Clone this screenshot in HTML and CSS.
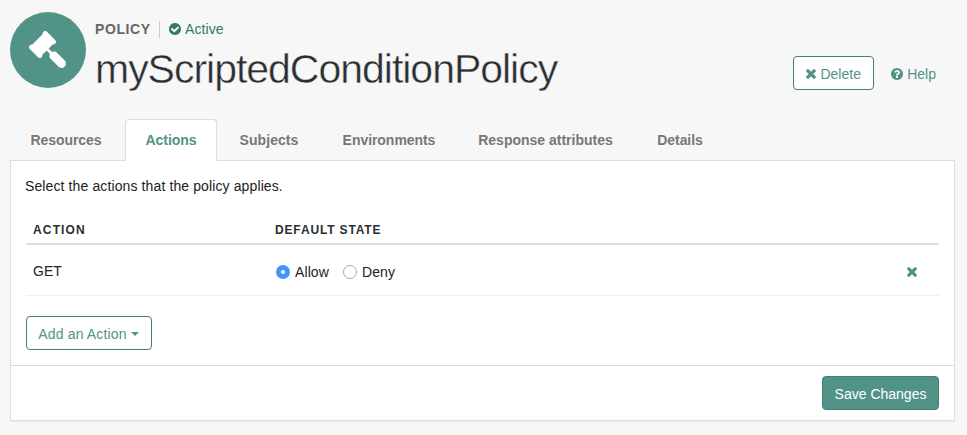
FILE: index.html
```html
<!DOCTYPE html>
<html lang="en">
<head>
<meta charset="utf-8">
<title>myScriptedConditionPolicy</title>
<link rel="stylesheet" href="styles.css">
</head>
<body>
<svg class="defs" width="0" height="0" aria-hidden="true">
  <symbol id="gavel" viewBox="0 0 37 37"><g stroke="currentColor" stroke-linecap="round" stroke-linejoin="round"><path stroke-width="5" d="M16.2 2.6 24.4 10.8M2.6 16.2l8.2 8.2"/><path stroke-width="2" d="M14.3 4 4 14.3 12.7 23 23 12.7Z"/><path stroke-width="2.8" d="M16 16 25 25"/><path stroke-width="2.6" d="M26.2 21.8 35.3 31 35.6 33.6 33.6 35.6 31 35.3 21.8 26.2 22 23.6 23.6 22Z"/></g></symbol>
  <symbol id="times" viewBox="110 -1170 1188 1188"><path transform="scale(1,-1)" d="M1298 214q0 -40 -28 -68l-136 -136q-28 -28 -68 -28t-68 28l-294 294l-294 -294q-28 -28 -68 -28t-68 28l-136 136q-28 28 -28 68t28 68l294 294l-294 294q-28 28 -28 68t28 68l136 136q28 28 68 28t68 -28l294 -294l294 294q28 28 68 28t68 -28l136 -136q28 -28 28 -68t-28 -68l-294 -294l294 -294q28 -28 28 -68z"/></symbol>
  <symbol id="check" viewBox="0 -1408 1536 1536"><path transform="scale(1,-1)" d="M1284 802q0 28 -18 46l-91 90q-19 19 -45 19t-45 -19l-408 -407l-226 226q-19 19 -45 19t-45 -19l-91 -90q-18 -18 -18 -46q0 -27 18 -45l362 -362q19 -19 45 -19q27 0 46 19l543 543q18 18 18 45zM1536 640q0 -209 -103 -385.5t-279.5 -279.5t-385.5 -103t-385.5 103t-279.5 279.5t-103 385.5t103 385.5t279.5 279.5t385.5 103t385.5 -103t279.5 -279.5t103 -385.5z"/></symbol>
  <symbol id="question" viewBox="0 -1408 1536 1536"><path transform="scale(1,-1)" d="M896 160v192q0 14 -9 23t-23 9h-192q-14 0 -23 -9t-9 -23v-192q0 -14 9 -23t23 -9h192q14 0 23 9t9 23zM1152 832q0 88 -55.5 163t-138.5 116t-170 41q-243 0 -371 -213q-15 -24 8 -42l132 -100q7 -6 19 -6q16 0 25 12q53 68 86 92q34 24 86 24q48 0 85.5 -26t37.5 -59q0 -38 -20 -61t-68 -45q-63 -28 -115.5 -86.5t-52.5 -125.5v-36q0 -14 9 -23t23 -9h192q14 0 23 9t9 23q0 19 21.5 49.5t54.5 49.5q32 18 49 28.5t46 35t44.5 48t28 60.5t12.5 81zM1536 640q0 -209 -103 -385.5t-279.5 -279.5t-385.5 -103t-385.5 103t-279.5 279.5t-103 385.5t103 385.5t279.5 279.5t385.5 103t385.5 -103t279.5 -279.5t103 -385.5z"/></symbol>
</svg>
<header class="page-header">
  <div class="badge"><svg class="gavel"><use href="#gavel"/></svg></div>
  <div class="heading">
    <div class="meta">
      <span class="kind">POLICY</span>
      <span class="status"><svg class="round-icon"><use href="#check"/></svg>Active</span>
    </div>
    <h1>myScriptedConditionPolicy</h1>
  </div>
  <div class="header-actions">
    <button class="btn delete"><svg class="x-icon"><use href="#times"/></svg>Delete</button>
    <a class="help"><svg class="round-icon"><use href="#question"/></svg>Help</a>
  </div>
</header>
<nav class="tabs">
  <a class="tab resources">Resources</a>
  <a class="tab actions active">Actions</a>
  <a class="tab subjects">Subjects</a>
  <a class="tab environments">Environments</a>
  <a class="tab response">Response attributes</a>
  <a class="tab details">Details</a>
</nav>
<main class="panel">
  <div class="panel-body">
    <p class="intro">Select the actions that the policy applies.</p>
    <div class="row head"><span>ACTION</span><span class="state-head">DEFAULT STATE</span></div>
    <div class="row item">
      <span class="action-name">GET</span>
      <span class="choices">
        <label class="choice"><i class="radio checked"></i>Allow</label>
        <label class="choice"><i class="radio"></i>Deny</label>
      </span>
      <svg class="x-icon"><use href="#times"/></svg>
    </div>
    <button class="btn add">Add an Action<i class="caret"></i></button>
  </div>
  <footer class="panel-footer"><button class="btn save">Save Changes</button></footer>
</main>
</body>
</html>
```
FILE: styles.css
```css
* { box-sizing: border-box; }
body {
  margin: 0;
  padding: 12px 12px 0 10px;
  height: 435px;
  background: #f7f7f7;
  color: #222;
  font: 14px/20px "Liberation Sans", Arial, sans-serif;
}
svg { fill: currentColor; flex: none; }
.defs { position: absolute; }
.page-header { display: flex; height: 107px; color: #519387; }
.badge {
  display: flex; align-items: center; justify-content: center;
  flex: none; width: 76px; height: 76px; padding: 0 1px 1px 0;
  border-radius: 50%; background: #519387; color: #fff;
}
.gavel { width: 37px; height: 37px; }
.heading { padding: 7px 0 0 9px; flex: 1; }
.meta { display: flex; height: 20px; align-items: center; }
.kind {
  width: 65px; height: 17px; line-height: 17px; border-right: 1px solid #ccc;
  color: #666; font-weight: bold; letter-spacing: .6px;
}
.status { display: flex; align-items: center; gap: 4px; padding-left: 9px; color: #34786b; letter-spacing: .1px; }
.round-icon { width: 12px; height: 12px; }
h1 {
  margin: 6px 0 0; color: #292f33;
  font-size: 41px; line-height: 48px; font-weight: normal;
  letter-spacing: -1.02px; white-space: nowrap;
  -webkit-text-stroke: .45px #f7f7f7;
}
.header-actions { display: flex; align-items: center; height: 34px; margin: 44px 19px 0 0; gap: 17px; }
.btn {
  display: flex; align-items: center; justify-content: center;
  height: 34px; padding: 2px 0 0;
  border: 1px solid #457f74; border-radius: 4px;
  background: #fff; color: #519387; font: inherit;
}
.x-icon { width: 10px; height: 10px; }
.delete { width: 81px; gap: 4px; }
.help { display: flex; align-items: center; gap: 4px; padding-top: 2px; }
.tabs { display: flex; height: 42px; position: relative; }
.tab {
  display: flex; justify-content: center; align-items: center;
  border: 1px solid transparent; color: #777; font-weight: bold;
  letter-spacing: -.05px; white-space: nowrap;
}
.active { background: #fff; color: #519387; border-color: #ddd #ddd #fff; border-radius: 4px 4px 0 0; }
.resources { width: 112px; margin-right: 3px; }
.actions { width: 92px; margin-right: 2px; }
.subjects { width: 100px; margin-right: 3px; letter-spacing: .05px; }
.environments { width: 134px; margin-right: 1px; }
.response { width: 177px; margin-right: 2px; letter-spacing: 0; }
.details { width: 88px; }
.panel { margin-top: -1px; width: 945px; height: 261px; background: #fff; border: 1px solid #ddd; box-shadow: 0 1px 1px rgba(0,0,0,.05); }
.panel-body { height: 204px; padding: 15px 15px 0; }
.intro { margin: 0 0 22px -1px; letter-spacing: .115px; }
.row { display: grid; grid-template-columns: 242px 1fr auto; padding: 0 7px; align-items: center; }
.head { height: 27px; border-bottom: 2px solid #ddd; padding-bottom: 2px; font-size: 12px; font-weight: bold; letter-spacing: 1.15px; color: #292f33; }
.state-head { letter-spacing: .85px; }
.item { height: 51px; border-bottom: 1px solid #eee; padding-top: 3px; padding-right: 22px; }
.item .x-icon { color: #519387; }
.action-name { padding-bottom: 2px; }
.choices { display: flex; gap: 14px; padding-left: 1px; letter-spacing: .1px; }
.choice { display: flex; align-items: center; gap: 5px; }
.radio { width: 14px; height: 14px; border: 1px solid #aaa; border-radius: 50%; background: #fff; }
.checked { border: 5px solid #3f97fc; }
.add { width: 126px; margin-top: 20px; gap: 4px; padding-right: 1px; letter-spacing: .15px; }
.caret { border: 4px solid transparent; border-top-color: #519387; border-bottom: 0; }
.panel-footer { display: flex; justify-content: flex-end; height: 55px; border-top: 1px solid #ddd; padding: 10px 15px; }
.save { width: 117px; background: #519387; color: #fff; }
```
